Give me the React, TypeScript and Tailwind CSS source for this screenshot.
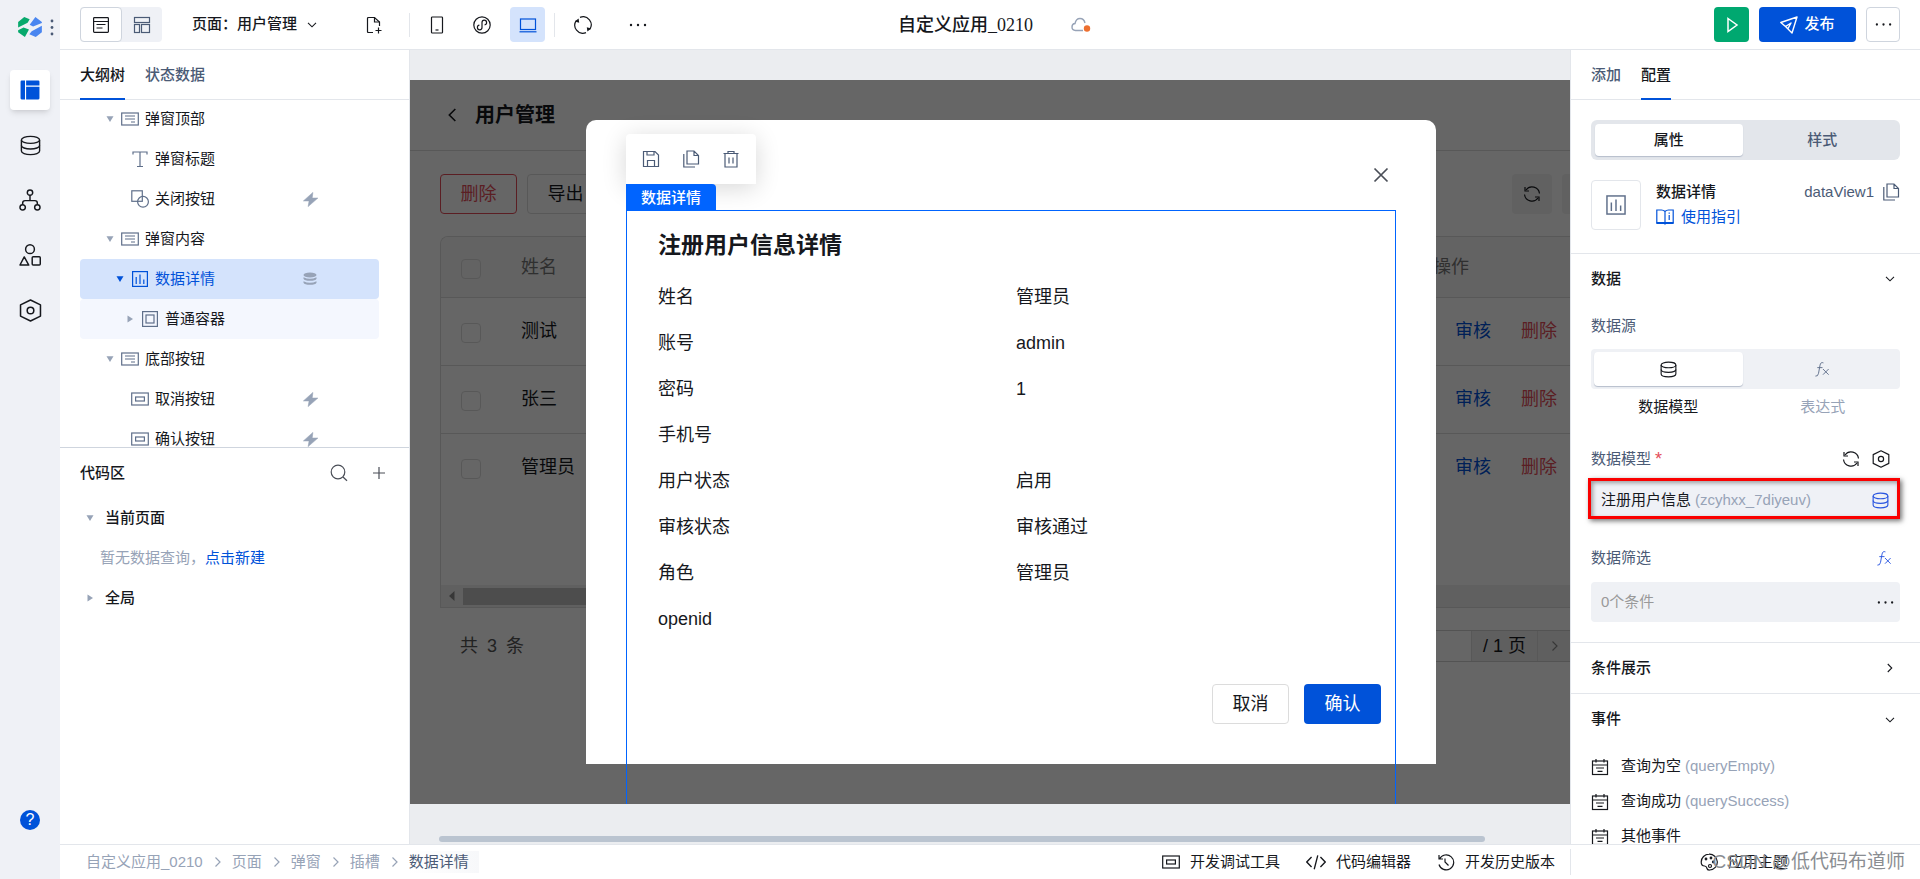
import { useState } from "react"
import type { ReactNode } from "react"

type IconProps = { size?: number; className?: string }

function Svg({ size = 18, className = "", children }: IconProps & { children: ReactNode }) {
  return (
    <svg
      width={size}
      height={size}
      viewBox="0 0 18 18"
      fill="none"
      stroke="currentColor"
      strokeWidth="1.2"
      className={"shrink-0 " + className}
      aria-hidden="true"
    >
      {children}
    </svg>
  )
}

const DatabaseIcon = (p: IconProps) => (
  <Svg {...p}>
    <ellipse cx="9" cy="4.200" rx="7.800" ry="3" />
    <path d="M1.200 4.200v9.600c0 1.700 3.500 3 7.800 3s7.800-1.300 7.800-3V4.200" />
    <path d="M1.200 9c0 1.700 3.500 3 7.800 3s7.800-1.300 7.800-3" />
  </Svg>
)

const TreeIcon = (p: IconProps) => (
  <Svg {...p}>
    <circle cx="9" cy="3" r="2.2" />
    <circle cx="3" cy="15" r="2.2" />
    <circle cx="15" cy="15" r="2.2" />
    <path d="M9 5.2v4.3M3 12.8v-1.3q0-2 2-2h8q2 0 2 2v1.3" />
  </Svg>
)

const ShapesIcon = (p: IconProps) => (
  <Svg {...p}>
    <circle cx="9" cy="4.2" r="3.6" />
    <path d="M4.3 10.6 8 17.2H.8z" strokeLinejoin="round" />
    <rect x="10.8" y="10.4" width="6.6" height="6.8" rx="0.8" />
  </Svg>
)

const HexIcon = (p: IconProps) => (
  <Svg {...p}>
    <path d="M9 .8 16.8 4.6v8.8L9 17.2 1.2 13.4V4.6z" strokeLinejoin="round" />
    <circle cx="9" cy="9" r="2.6" />
  </Svg>
)

const LayoutIcon = (p: IconProps) => (
  <Svg {...p}>
    <path d="M1.5 .5h3v17h-3q-1 0-1-1v-15q0-1 1-1zM5.500 .5h11q1 0 1 1v3.500h-12zM5.500 6h12v10.500q0 1-1 1h-11z" fill="currentColor" stroke="none" />
  </Svg>
)

const ListIcon = (p: IconProps) => (
  <Svg {...p}>
    <rect x="1.600" y="1.600" width="14.800" height="14.800" rx="0.8" />
    <path d="M1.600 5.500h14.800M4.500 8.500h9M4.500 12h6" />
  </Svg>
)

const BlocksIcon = (p: IconProps) => (
  <Svg {...p}>
    <rect x="1.500" y="1.500" width="15" height="5" />
    <rect x="1.500" y="8.500" width="5" height="8" />
    <rect x="8.500" y="8.500" width="8" height="8" />
  </Svg>
)

const FilePlusIcon = (p: IconProps) => (
  <Svg {...p}>
    <path d="M8 16.500H3.500q-1 0-1-1v-13q0-1 1-1h6L14.500 6v4" />
    <path d="M9.500 1.500V6h5M13.500 11.500v6M10.500 14.500h6" />
  </Svg>
)

const PhoneIcon = (p: IconProps) => (
  <Svg {...p}>
    <rect x="3.500" y="1" width="11" height="16" rx="0.8" />
    <path d="M7.500 14h3" />
  </Svg>
)

const MiniAppIcon = (p: IconProps) => (
  <Svg {...p}>
    <circle cx="9" cy="9" r="8.200" />
    <path d="M9 11.500a2.300 2.300 0 1 1-2.600-2.300M9 11.500v-5a2.300 2.300 0 1 1 2.600 2.300" />
  </Svg>
)

const LaptopIcon = (p: IconProps) => (
  <Svg {...p}>
    <rect x="1.500" y="3" width="15" height="10.500" />
    <path d="M.5 15.800h17" />
  </Svg>
)

const RefreshIcon = (p: IconProps) => (
  <Svg {...p}>
    <path d="M3 5A7.500 7.500 0 0 1 16.500 8.500M15 13A7.500 7.500 0 0 1 1.500 9.500" />
    <path d="M2 2v4h4M16 16v-4h-4" />
  </Svg>
)

const RotateIcon = (p: IconProps) => (
  <Svg {...p}>
    <path d="M6 1.400a8 8 0 0 1 9.500 12.200M12 16.600A8 8 0 0 1 2.500 4.400" />
    <path d="M.8 5.600 4.600 2.600l.6 4.200zM17.200 12.400l-3.800 3-.6-4.200z" fill="currentColor" stroke="none" />
  </Svg>
)

const DotsIcon = (p: IconProps) => (
  <Svg {...p}>
    <g fill="currentColor" stroke="none">
      <circle cx="2" cy="9" r="1.200" />
      <circle cx="9" cy="9" r="1.200" />
      <circle cx="16" cy="9" r="1.200" />
    </g>
  </Svg>
)

const PanelIcon = (p: IconProps) => (
  <Svg {...p}>
    <rect x=".7" y="3" width="16.600" height="12" />
    <path d="M4 6h10M4 9h10M10 12h4" />
  </Svg>
)

const TextIcon = (p: IconProps) => (
  <Svg {...p}>
    <path d="M2 4.500V2h14v2.500M9 2v14.500M6 16.500h6" />
  </Svg>
)

const CombineIcon = (p: IconProps) => (
  <Svg {...p}>
    <rect x=".8" y=".8" width="10.500" height="10.500" />
    <circle cx="12" cy="11.800" r="5.400" />
  </Svg>
)

const ChartIcon = (p: IconProps) => (
  <Svg {...p}>
    <rect x="1.600" y="1.600" width="14.800" height="14.800" />
    <path d="M5.200 7v7M9 4.500V14M12.800 9.500V14" />
  </Svg>
)

const BoxIcon = (p: IconProps) => (
  <Svg {...p}>
    <rect x="1.600" y="1.600" width="14.800" height="14.800" />
    <rect x="5" y="5" width="8" height="8" />
  </Svg>
)

const ButtonIcon = (p: IconProps) => (
  <Svg {...p}>
    <rect x=".7" y="3" width="16.600" height="12" />
    <rect x="4.600" y="7" width="8.800" height="4" />
  </Svg>
)

const BoltIcon = (p: IconProps) => (
  <Svg {...p}>
    <path d="M11.500 1.500 1.500 10.500H7.500L6.500 16.500 16.800 7.500H10.800z" fill="currentColor" stroke="currentColor" strokeWidth=".6" />
  </Svg>
)

const SolidDbIcon = (p: IconProps) => (
  <Svg {...p}>
    <g fill="currentColor" stroke="none">
      <ellipse cx="9" cy="5" rx="6.500" ry="2.500" />
      <path d="M2.500 7.200q6.500 3 13 0v1.600q-1 2-6.500 2t-6.500-2zM2.500 11.200q6.500 3 13 0v1.600q-1 2-6.500 2t-6.500-2z" />
    </g>
  </Svg>
)

const SearchIcon = (p: IconProps) => (
  <Svg {...p}>
    <circle cx="8" cy="8" r="6.800" />
    <path d="m13 13 4 3.800" />
  </Svg>
)

const PlusIcon = (p: IconProps) => (
  <Svg {...p}>
    <path d="M9 3v12M3 9h12" />
  </Svg>
)

const ChevronIcon = (p: IconProps) => (
  <Svg {...p}>
    <path d="m6.500 4.500 4.500 4.500-4.500 4.500" />
  </Svg>
)

const SaveIcon = (p: IconProps) => (
  <Svg {...p}>
    <path d="M1.500 1.500H13L16.500 5v11.500h-15zM5 1.500V5h7V1.500M5.500 16.500v-6h7v6" />
  </Svg>
)

const CopyIcon = (p: IconProps) => (
  <Svg {...p}>
    <path d="M5 1h7l4.500 4.500V14H5zM12 1v4.500h4.500" />
    <path d="M1.800 4v13H13" />
  </Svg>
)

const TrashIcon = (p: IconProps) => (
  <Svg {...p}>
    <path d="M1.500 3.500h15M6 3.500v-2h6v2M3 3.500v13.500h12V3.500M7 7.500v6M11 7.500v6" />
  </Svg>
)

const CloseIcon = (p: IconProps) => (
  <Svg {...p}>
    <path d="m2.500 2.500 13 13M15.500 2.500l-13 13" strokeWidth="1.700" />
  </Svg>
)

const BookIcon = (p: IconProps) => (
  <Svg {...p}>
    <path d="M9 3.500v12M9 3.500Q7.500 2 5.500 2H.8v13H7.500q1 0 1.500 1 .5-1 1.500-1h6.700V2h-4.700Q10.500 2 9 3.500zM13.200 7v5M13.200 4.500v1.200" />
    <path d="M.5 15H17.500" strokeWidth="2" />
  </Svg>
)

const EventIcon = (p: IconProps) => (
  <Svg {...p}>
    <rect x="1.500" y="3" width="15" height="13.500" />
    <path d="M1.500 7h15M5 1v3.500M13 1v3.500M5 10h8M6.500 13.300h5" />
  </Svg>
)

const CodeIcon = (p: IconProps) => (
  <Svg {...p}>
    <path d="M5 4.500.7 9 5 13.500M13 4.500 17.300 9 13 13.500M10.600 3 7.400 15.500" />
  </Svg>
)

const HistoryIcon = (p: IconProps) => (
  <Svg {...p}>
    <path d="M2 2v4h4M2.500 6A7.500 7.500 0 1 1 2 11.500M8 5.500V9l3.500 3.500" />
  </Svg>
)

const PaletteIcon = (p: IconProps) => (
  <Svg {...p}>
    <path d="M9 1.200A7.900 7.900 0 0 0 1.200 9c0 2.500 1.600 4 3.400 4 1.600 0 2 .8 2.200 2 .3 1.400 1.400 2.200 3 2A7.900 7.900 0 0 0 9 1.200z" />
    <circle cx="6" cy="6" r=".8" />
    <circle cx="11" cy="5" r=".8" />
    <circle cx="13.300" cy="9" r=".8" />
    <circle cx="10" cy="13" r="1.500" />
  </Svg>
)

const FxIcon = (p: IconProps) => (
  <Svg {...p}>
    <path d="M10 2q-3-1.200-3.600 2.400L4.800 13q-.6 3.500-3.300 3M3.500 7h5.500M9.500 8.500l6 6M15.500 8.500l-6 6" strokeWidth="1" />
  </Svg>
)

function Arrow({ open, className = "" }: { open: boolean; className?: string }) {
  return (
    <svg width="8" height="8" viewBox="0 0 8 8" className={"shrink-0 " + className} fill="currentColor" aria-hidden="true">
      <path d={open ? "M.5 1.200h7L4 7z" : "M1.500.5v7L7 4z"} />
    </svg>
  )
}

type TreeRow = {
  label: string
  icon: (p: IconProps) => ReactNode
  pad: string
  arrow?: "open" | "closed"
  state?: "selected" | "child"
  mark?: "bolt" | "db"
}

const treeRows: TreeRow[] = [
  { label: "弹窗顶部", icon: PanelIcon, pad: "pl-5", arrow: "open" },
  { label: "弹窗标题", icon: TextIcon, pad: "pl-[30px]" },
  { label: "关闭按钮", icon: CombineIcon, pad: "pl-[30px]", mark: "bolt" },
  { label: "弹窗内容", icon: PanelIcon, pad: "pl-5", arrow: "open" },
  { label: "数据详情", icon: ChartIcon, pad: "pl-[30px]", arrow: "open", state: "selected", mark: "db" },
  { label: "普通容器", icon: BoxIcon, pad: "pl-10", arrow: "closed", state: "child" },
  { label: "底部按钮", icon: PanelIcon, pad: "pl-5", arrow: "open" },
  { label: "取消按钮", icon: ButtonIcon, pad: "pl-[30px]", mark: "bolt" },
  { label: "确认按钮", icon: ButtonIcon, pad: "pl-[30px]", mark: "bolt" },
]

const details = [
  ["姓名", "管理员"],
  ["账号", "admin"],
  ["密码", "1"],
  ["手机号", ""],
  ["用户状态", "启用"],
  ["审核状态", "审核通过"],
  ["角色", "管理员"],
  ["openid", ""],
]

const crumbs = ["自定义应用_0210", "页面", "弹窗", "插槽"]

const events = [
  { label: "查询为空", code: "(queryEmpty)" },
  { label: "查询成功", code: "(querySuccess)" },
  { label: "其他事件", code: "" },
]

function Rail() {
  return (
    <nav className="flex w-[60px] shrink-0 flex-col items-center bg-[#eff1f6] pb-[49px]">
      <div className="flex h-[70px] w-full gap-2 pt-[17px] pl-[18px]">
        <svg width="24" height="20" viewBox="0 0 70 59" className="shrink-0" aria-hidden="true">
          <path d="M0 15 18 0 34 7 28 17 0 31zM0 39 16 31 32 37 20 59 0 45z" fill="#07a96c" />
          <path d="M51 0 70 15V18L44 28 34 23zM70 26V45L52 59 33 51 40 42z" fill="#4a86f0" />
        </svg>
        <svg width="4" height="18" viewBox="0 0 4 18" fill="#4b5b76" className="mt-px" aria-hidden="true">
          <circle cx="2" cy="3" r="1.400" />
          <circle cx="2" cy="9.500" r="1.400" />
          <circle cx="2" cy="16" r="1.400" />
        </svg>
      </div>
      <div className="flex flex-col gap-[15px] text-[#16181d]">
        <button aria-label="页面" className="flex size-10 items-center justify-center rounded bg-white text-[#0052d9] shadow-md">
          <LayoutIcon size={20} />
        </button>
        <button aria-label="数据" className="flex size-10 items-center justify-center">
          <DatabaseIcon size={21} />
        </button>
        <button aria-label="流程" className="flex size-10 items-center justify-center">
          <TreeIcon size={22} />
        </button>
        <button aria-label="组件" className="flex size-10 items-center justify-center">
          <ShapesIcon size={22} />
        </button>
        <button aria-label="设置" className="flex size-10 items-center justify-center">
          <HexIcon size={23} />
        </button>
      </div>
      <button aria-label="帮助" className="mt-auto flex size-5 items-center justify-center rounded-full bg-[#0052d9] text-base leading-5 text-white">
        ?
      </button>
    </nav>
  )
}

function Header() {
  return (
    <header className="flex h-[50px] shrink-0 items-center border-b border-[#e3e6eb] bg-white px-5">
      <div className="flex h-[35px] rounded bg-[#eff1f6]">
        <button aria-label="列表视图" className="flex w-[42px] items-center justify-center rounded border border-[#cfd5de] bg-white">
          <ListIcon />
        </button>
        <button aria-label="布局视图" className="flex w-10 items-center justify-center text-[#4b5b76]">
          <BlocksIcon />
        </button>
      </div>
      <button className="ml-[30px] flex items-center gap-[7px] font-medium">
        页面：用户管理
        <ChevronIcon size={16} className="rotate-90" />
      </button>
      <button aria-label="新建页面" className="ml-[45px]">
        <FilePlusIcon />
      </button>
      <span className="ml-[26px] h-6 w-px bg-[#e3e6eb]" />
      <button aria-label="手机" className="ml-[18px]">
        <PhoneIcon />
      </button>
      <button aria-label="小程序" className="ml-[27px]">
        <MiniAppIcon />
      </button>
      <button aria-label="电脑" className="ml-[19px] flex size-[35px] items-center justify-center rounded bg-[#d4e3fc] text-[#0052d9]">
        <LaptopIcon />
      </button>
      <span className="ml-[9px] h-6 w-px bg-[#e3e6eb]" />
      <button aria-label="刷新" className="ml-[19px]">
        <RotateIcon />
      </button>
      <button aria-label="更多" className="ml-[37px]">
        <DotsIcon />
      </button>
      <div className="ml-[251px] flex items-center gap-[38px]">
        <h1 className="font-['Liberation_Serif','Noto_Sans_CJK_SC',serif] text-lg font-medium">自定义应用_0210</h1>
        <svg width="20" height="18" viewBox="0 0 20 18" aria-hidden="true">
          <path d="M12 14.500H4.500Q1 14.300 1 11T4 7.500Q5 2.500 9 2.500T14 7" fill="none" stroke="#97a3b7" strokeWidth="1.400" />
          <circle cx="16" cy="12.500" r="3.200" fill="#ed7030" />
        </svg>
      </div>
      <div className="ml-auto flex h-[35px] gap-2.5">
        <button aria-label="预览" className="flex w-[35px] items-center justify-center rounded bg-[#00a870] text-white">
          <Svg>
            <path d="M5 2.500 14 9 5 15.500z" strokeWidth="1.500" />
          </Svg>
        </button>
        <button className="flex w-[97px] items-center justify-center gap-1.5 rounded bg-[#0052d9] font-medium text-white">
          <Svg>
            <path d="M17 1 .8 6.500 5.500 10.500 12 17zM5.500 10.500 11 7l-3 5.500" strokeWidth="1.400" strokeLinejoin="round" />
          </Svg>
          发布
        </button>
        <button aria-label="更多操作" className="flex w-[34px] items-center justify-center rounded border border-[#cfd5de]">
          <DotsIcon size={17} />
        </button>
      </div>
    </header>
  )
}

function LeftPanel() {
  return (
    <aside className="flex w-[350px] shrink-0 flex-col border-r border-[#e3e6eb] bg-white">
      <div className="flex h-[50px] shrink-0 gap-5 border-b border-[#e3e6eb] px-5">
        <button className="h-[50px] border-b-2 border-[#0052d9] pt-0.5 font-medium">大纲树</button>
        <button className="h-[50px] font-medium text-[#4b5b76]">状态数据</button>
      </div>
      <ul className="-mt-px h-[348px] shrink-0 overflow-hidden pr-[30px] pl-5">
        {treeRows.map((row) => {
          const Icon = row.icon
          const selected = row.state === "selected"
          return (
            <li
              key={row.label}
              className={
                "flex h-10 items-center rounded " +
                row.pad +
                (selected ? " bg-[#d4e3fc] text-[#0052d9]" : "") +
                (row.state === "child" ? " bg-[#f4f7fe]" : "")
              }
            >
              <span className={"flex w-5 justify-center " + (selected ? "" : "text-[#97a3b7]")}>
                {row.arrow && <Arrow open={row.arrow === "open"} />}
              </span>
              <span className={"mr-[5px] flex w-5 justify-center " + (selected ? "" : "text-[#5f6f8a]")}>
                <Icon />
              </span>
              {row.label}
              {row.mark && (
                <span className="mr-[60px] ml-auto text-[#97a3b7]">
                  {row.mark === "bolt" ? <BoltIcon size={17} /> : <SolidDbIcon />}
                </span>
              )}
            </li>
          )
        })}
      </ul>
      <div className="flex flex-1 flex-col border-t border-[#cfd5de]">
        <div className="flex h-[50px] items-center pr-[21px] pl-5 font-medium">
          代码区
          <button aria-label="搜索" className="ml-auto text-[#4a4e57]">
            <SearchIcon />
          </button>
          <button aria-label="新增" className="ml-[22px] text-[#4a4e57]">
            <PlusIcon />
          </button>
        </div>
        <div className="flex h-10 items-center gap-[11px] pl-[26px] font-medium">
          <Arrow open className="text-[#97a3b7]" />
          当前页面
        </div>
        <div className="flex h-10 items-center pl-10 text-[#97a3b7]">
          暂无数据查询，
          <a href="#" className="text-[#0052d9]">点击新建</a>
        </div>
        <div className="flex h-10 items-center gap-[11px] pl-[26px] font-medium">
          <Arrow open={false} className="text-[#97a3b7]" />
          全局
        </div>
      </div>
    </aside>
  )
}

function UserPage() {
  return (
    <div className="flex flex-col bg-white text-lg text-[#16181d]">
      <div className="flex h-[71px] items-center gap-[11px] border-b border-[#dcdcdc] pl-[30px]">
        <button aria-label="返回">
          <ChevronIcon size={24} className="rotate-180" />
        </button>
        <h2 className="text-xl font-bold">用户管理</h2>
      </div>
      <div className="flex h-[85px] items-center gap-2.5 pr-2.5 pl-[30px]">
        <button className="h-10 w-[77px] rounded border border-[#e34d59] text-[#e34d59]">删除</button>
        <button className="h-10 w-[77px] rounded border border-[#dcdcdc]">导出</button>
        <button aria-label="刷新表格" className="ml-auto flex size-10 items-center justify-center rounded bg-[#f3f3f3]">
          <RefreshIcon />
        </button>
        <button aria-label="表格设置" className="flex size-10 items-center justify-center rounded bg-[#f3f3f3]">
          <HexIcon />
        </button>
      </div>
      <div className="ml-[30px] flex h-[372px] flex-col overflow-hidden rounded-t-lg border border-r-0 border-[#dcdcdc]">
        <table className="w-full table-fixed text-left">
          <thead>
            <tr className="h-[60px] border-b border-[#dcdcdc] bg-[#f7f7f7] text-[#777]">
              <th className="w-[60px] pt-1 pl-5">
                <input type="checkbox" aria-label="全选" className="block size-5 appearance-none rounded border border-[#dcdcdc]" />
              </th>
              <th className="pl-5 font-normal">姓名</th>
              <th className="w-[199px] pl-5 font-normal">操作</th>
            </tr>
          </thead>
          <tbody>
            {["测试", "张三", "管理员"].map((name) => (
              <tr key={name} className="h-[68px] border-b border-[#dcdcdc] last:border-0">
                <td className="pt-1 pl-5">
                  <input type="checkbox" aria-label={name} className="block size-5 appearance-none rounded border border-[#dcdcdc]" />
                </td>
                <td className="pl-5">{name}</td>
                <td className="pl-[42px]">
                  <button className="mr-[30px] text-[#0052d9]">审核</button>
                  <button className="text-[#e34d59]">删除</button>
                </td>
              </tr>
            ))}
          </tbody>
        </table>
        <div className="mt-auto flex h-[22px] items-center gap-2 bg-[#f1f1f1] pl-2">
          <svg width="6" height="10" viewBox="0 0 6 10" fill="#8a8a8a" aria-hidden="true">
            <path d="M5.500 0v10L0 5z" />
          </svg>
          <span className="h-[17px] w-[520px] bg-[#c1c1c1]" />
        </div>
      </div>
      <div className="flex items-center pt-[22px] pl-[50px] text-[#555]">
        <span>共&ensp;3&ensp;条</span>
        <div className="ml-auto flex h-8 border-y border-[#cfcfcf] text-[#16181d]">
          <input type="text" aria-label="页码" className="w-[120px]" />
          <span className="flex w-[67px] items-center justify-center border-x border-[#dcdcdc] bg-[#eee]">/ 1 页</span>
          <button aria-label="下一页" disabled className="w-[74px] bg-[#eee] pl-2 text-[#8a8a8a]">
            <ChevronIcon />
          </button>
        </div>
      </div>
    </div>
  )
}

function DetailDialog() {
  return (
    <div role="dialog" aria-label="注册用户信息详情" className="w-[850px] rounded-t-[10px] bg-white text-lg text-[#16181d]">
      <div className="flex h-[90px] items-start justify-end pt-[46px] pr-[46px]">
        <button aria-label="关闭" className="text-[#4a4e57]">
          <CloseIcon />
        </button>
      </div>
      <section className="relative mx-10 px-8 pt-[13px]">
        <h3 className="mb-[5px] flex h-[46px] items-center text-[23px] font-bold">注册用户信息详情</h3>
        <dl>
          {details.map(([label, value]) => (
            <div key={label} className="grid h-[46px] grid-cols-2 items-center gap-x-2.5">
              <dt>{label}</dt>
              <dd>{value}</dd>
            </div>
          ))}
        </dl>
        {/* selection frame of the active component, runs on below the dialog */}
        <div className="pointer-events-none absolute inset-x-0 top-0 h-[640px] border border-[#0064ff]">
          <div className="absolute bottom-full -left-px flex flex-col items-start">
            <div className="flex h-[50px] items-center gap-[22px] rounded-t bg-white px-4 text-[#4b5b76] shadow-[0_4px_24px_rgba(0,0,0,0.16)]">
              <SaveIcon />
              <CopyIcon />
              <TrashIcon />
            </div>
            <span className="relative flex h-[27px] items-center rounded-tr bg-[#0064ff] px-[15px] text-[15px] font-medium text-white">
              数据详情
            </span>
          </div>
        </div>
      </section>
      <div className="flex justify-end gap-[15px] pt-[42px] pr-[55px] pb-10">
        <button className="h-10 w-[77px] rounded border border-[#dcdcdc]">取消</button>
        <button className="h-10 w-[77px] rounded bg-[#0052d9] text-white">确认</button>
      </div>
    </div>
  )
}

function Canvas() {
  return (
    <main className="flex min-w-0 flex-1 flex-col bg-[#ebedf0] pt-[30px]">
      <div className="min-h-0 flex-1 overflow-hidden">
        <div className="relative flex h-full w-[calc(100%+42px)] flex-col overflow-hidden bg-white">
          <UserPage />
          <div className="absolute inset-0 flex items-start justify-center bg-black/60 pt-10">
            <DetailDialog />
          </div>
        </div>
      </div>
      <div className="flex h-10 shrink-0 items-end pr-[85px] pb-0.5 pl-[29px]">
        <div className="h-1.5 w-full rounded-full bg-[#bac4d0]" />
      </div>
    </main>
  )
}

function RightPanel() {
  const [tab, setTab] = useState("属性")

  return (
    <aside className="flex w-[350px] shrink-0 flex-col overflow-hidden border-l border-[#e3e6eb] bg-white">
      <div className="flex h-[50px] shrink-0 gap-5 border-b border-[#e3e6eb] px-5">
        <button className="h-[50px] font-medium text-[#4b5b76]">添加</button>
        <button className="h-[50px] border-b-2 border-[#0052d9] pt-0.5 font-medium">配置</button>
      </div>

      <div className="shrink-0 border-b border-[#e3e6eb] px-5 pt-5 pb-[23px]">
        <div className="flex h-10 gap-1.5 rounded-md bg-[#e3e6eb] p-1">
          {["属性", "样式"].map((name) => (
            <button
              key={name}
              onClick={() => setTab(name)}
              className={
                "flex-1 rounded-sm font-medium " +
                (tab === name ? "bg-white shadow-[0_1px_1px_#b5bdcb]" : "text-[#4b5b76]")
              }
            >
              {name}
            </button>
          ))}
        </div>
        <div className="mt-5 flex h-[50px]">
          <span className="flex size-[50px] items-center justify-center rounded border border-[#e3e6eb] text-[#5f6f8a]">
            <ChartIcon size={22} />
          </span>
          <div className="ml-[15px] flex flex-col">
            <span className="leading-6 font-medium">数据详情</span>
            <a href="#" className="flex items-center gap-[7px] leading-[26px] text-[#0052d9]">
              <BookIcon />
              使用指引
            </a>
          </div>
          <div className="ml-auto flex h-6 items-center gap-2 text-[#4b5b76]">
            dataView1
            <button aria-label="复制">
              <CopyIcon />
            </button>
          </div>
        </div>
      </div>

      <div className="shrink-0 border-b border-[#e3e6eb] pr-5 pb-5 pl-5">
        <h2 className="flex h-[50px] items-center justify-between font-medium">
          数据
          <ChevronIcon size={16} className="mr-0.5 rotate-90" />
        </h2>
        <p className="flex h-[45px] items-center text-[#4b5b76]">数据源</p>
        <div className="flex h-10 gap-1.5 rounded bg-[#eff1f5] p-[3px]">
          <button aria-label="数据模型" className="flex flex-1 items-center justify-center rounded bg-white shadow-[0_1px_1px_#b5bdcb]">
            <DatabaseIcon size={17} />
          </button>
          <button aria-label="表达式" className="flex flex-1 items-center justify-center text-[#5f6f8a]">
            <FxIcon size={17} />
          </button>
        </div>
        <div className="flex h-9 items-center text-center">
          <span className="flex-1">数据模型</span>
          <span className="flex-1 text-[#97a3b7]">表达式</span>
        </div>

        <div className="mt-[15px] flex h-[38px] items-center text-[#4b5b76]">
          数据模型
          <span className="ml-1 text-lg leading-5 text-[#e34d59]">*</span>
          <div className="mr-2.5 ml-auto flex gap-3 text-[#16181d]">
            <button aria-label="刷新模型">
              <RefreshIcon />
            </button>
            <button aria-label="模型设置">
              <HexIcon />
            </button>
          </div>
        </div>
        <button className="-mx-[3px] flex h-[41px] w-[calc(100%+3px)] items-center border-3 border-[#fa0000] bg-[#eff1f6] pt-1 pr-2 pl-2.5 shadow-[2px_2px_5px_rgba(0,0,0,0.55),inset_2px_2px_4px_rgba(0,0,0,0.35)]">
          注册用户信息
          <span className="ml-1 text-[#97a3b7]">(zcyhxx_7diyeuv)</span>
          <DatabaseIcon size={17} className="ml-auto text-[#2a56e0]" />
        </button>

        <div className="mt-[15px] flex h-12 items-center justify-between pr-[7px] text-[#4b5b76]">
          数据筛选
          <button aria-label="表达式筛选" className="text-[#2a56e0]">
            <FxIcon size={17} />
          </button>
        </div>
        <button className="flex h-10 w-full items-center justify-between rounded bg-[#eff1f5] pr-1.5 pl-2.5 text-[#999]">
          0个条件
          <DotsIcon size={17} className="text-[#16181d]" />
        </button>
      </div>

      <h2 className="flex h-[51px] shrink-0 items-center justify-between border-b border-[#e3e6eb] pr-[22px] pl-5 font-medium">
        条件展示
        <ChevronIcon size={16} />
      </h2>

      <div className="min-h-0 flex-1 overflow-hidden pl-5">
        <h2 className="flex h-[51px] items-center justify-between pr-[22px] font-medium">
          事件
          <ChevronIcon size={16} className="rotate-90" />
        </h2>
        <ul className="pt-1">
          {events.map((event) => (
            <li key={event.label} className="flex h-[35px] items-center">
              <EventIcon className="mr-3" />
              {event.label}
              <span className="ml-1 text-[#97a3b7]">{event.code}</span>
            </li>
          ))}
        </ul>
      </div>
    </aside>
  )
}

function Footer() {
  return (
    <footer className="relative flex h-[35px] shrink-0 items-center border-t border-[#e3e6eb] bg-white pl-[26px]">
      <nav className="flex items-center text-[#97a3b7]">
        {crumbs.map((name) => (
          <span key={name} className="flex items-center">
            <a href="#">{name}</a>
            <ChevronIcon className="mr-[5px] ml-1.5" />
          </span>
        ))}
        <a href="#" className="bg-linear-to-r from-white to-[#f7f8fa] pr-2.5 text-[#4b5b76]">数据详情</a>
      </nav>
      <div className="ml-auto flex items-center">
        <button className="flex items-center gap-2.5">
          <ButtonIcon />
          开发调试工具
        </button>
        <button className="ml-[26px] flex items-center gap-2.5">
          <CodeIcon size={20} />
          代码编辑器
        </button>
        <button className="ml-[26px] flex items-center gap-2.5">
          <HistoryIcon />
          开发历史版本
        </button>
      </div>
      <div className="ml-[15px] flex h-[26px] w-[350px] items-center border-l border-[#e3e6eb] pl-[129px]">
        <button className="flex items-center gap-2.5">
          <PaletteIcon />
          应用主题
        </button>
      </div>
      <span className="pointer-events-none absolute right-[15px] bottom-[3px] text-[19px] text-[#8a8d92]">CSDN @低代码布道师</span>
    </footer>
  )
}

export default function App() {
  return (
    <div className="flex h-screen overflow-hidden font-['Liberation_Sans','Noto_Sans_CJK_SC',sans-serif] text-[15px] text-[#16181d]">
      <Rail />
      <div className="flex min-w-0 flex-1 flex-col">
        <Header />
        <div className="flex min-h-0 flex-1">
          <LeftPanel />
          <Canvas />
          <RightPanel />
        </div>
        <Footer />
      </div>
    </div>
  )
}
